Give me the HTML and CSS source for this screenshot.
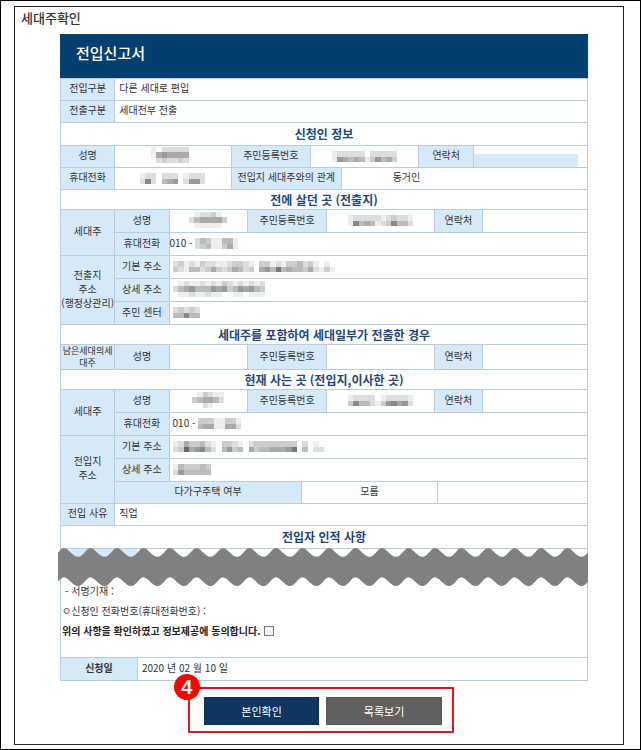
FILE: index.html
```html
<!DOCTYPE html>
<html lang="ko">
<head>
  <meta charset="UTF-8" />
  <meta name="viewport" content="width=device-width, initial-scale=1.0"/>
  <title>전입신고서</title>
  <link rel="stylesheet" href="styles.css">
</head>
<body>
  <main class="sheet">
    <h1 class="page-title">세대주확인</h1>

    <form class="report">
      <h2 class="report-title">전입신고서</h2>

      <table>
        <colgroup><col class="c-label"><col></colgroup>
        <tr><th>전입구분</th><td class="text">다른 세대로 편입</td></tr>
        <tr><th>전출구분</th><td class="text">세대전부 전출</td></tr>
      </table>

      <h3 class="section tall">신청인 정보</h3>
      <table>
        <colgroup>
          <col class="c-label"><col class="a-name"><col class="a-number"><col class="a-relation">
          <col class="a-value"><col class="a-contact"><col>
        </colgroup>
        <tr>
          <th>성명</th>
          <td><span class="mask" data-shades="efdddddf ea9aaaaf fdcddcdf"></span></td>
          <th>주민등록번호</th>
          <td colspan="2"><span class="mask" data-shades="edddddfddddd e9ababec9bac"></span></td>
          <th>연락처</th>
          <td class="field"><div class="field-fill"></div></td>
        </tr>
        <tr>
          <th>휴대전화</th>
          <td><span class="mask" data-shades="eddfdddfeddd d8dfba9fd99d"></span></td>
          <th colspan="2">전입지 세대주와의 관계</th>
          <td colspan="3" class="relation">동거인</td>
        </tr>
      </table>

      <h3 class="section">전에 살던 곳 (전출지)</h3>
      <table class="roomy">
        <colgroup>
          <col class="c-label"><col class="c-label"><col class="b-name"><col class="b-number">
          <col class="b-value"><col class="b-contact"><col>
        </colgroup>
        <tr>
          <th rowspan="2">세대주</th>
          <th>성명</th>
          <td><span class="mask" data-shades="feddcef dbaaaac feeeeef"></span></td>
          <th>주민등록번호</th>
          <td><span class="mask" data-shades="edddddedcdde e8babedc8bbd"></span></td>
          <th>연락처</th>
          <td></td>
        </tr>
        <tr>
          <th>휴대전화</th>
          <td colspan="5" class="phone">010 - <span class="mask" data-shades="dbceebbe dcbeecae"></span></td>
        </tr>
        <tr>
          <th rowspan="3">전출지<br>주소<br>(행정상관리)</th>
          <th>기본 주소</th>
          <td colspan="5" class="wide"><span class="mask" data-shades="dcedecddeedccdefccedeccbdcefef cdebbdcacdcabdcfa9b7babbcadece"></span></td>
        </tr>
        <tr>
          <th>상세 주소</th>
          <td colspan="5" class="wide"><span class="mask" data-shades="fedeededecdededed dba9bbb9a9cb9a9bc feedeedeeffeefeee"></span></td>
        </tr>
        <tr>
          <th>주민 센터</th>
          <td colspan="5" class="wide"><span class="mask" data-shades="dcdcd bb8bb"></span></td>
        </tr>
      </table>

      <h3 class="section">세대주를 포함하여 세대일부가 전출한 경우</h3>
      <table class="roomy">
        <colgroup>
          <col class="c-label"><col class="c-label"><col class="b-name"><col class="b-number">
          <col class="b-value"><col class="b-contact"><col>
        </colgroup>
        <tr>
          <th class="stacked">남은세대의세<br>대주</th>
          <th>성명</th>
          <td></td>
          <th>주민등록번호</th>
          <td></td>
          <th>연락처</th>
          <td></td>
        </tr>
      </table>

      <h3 class="section">현재 사는 곳 (전입지,이사한 곳)</h3>
      <table class="roomy">
        <colgroup>
          <col class="c-label"><col class="c-label"><col class="b-name"><col class="m-left"><col class="m-right">
          <col class="b-value"><col class="m-edge"><col class="m-contact"><col>
        </colgroup>
        <tr>
          <th rowspan="2">세대주</th>
          <th>성명</th>
          <td><span class="mask" data-shades="fecdee cbaabd ffdeff"></span></td>
          <th colspan="2">주민등록번호</th>
          <td><span class="mask" data-shades="eddddfedddde c8bbdec98a9d"></span></td>
          <th colspan="2">연락처</th>
          <td></td>
        </tr>
        <tr>
          <th>휴대전화</th>
          <td colspan="7" class="wide">010 - <span class="mask" data-shades="ccceecce baaeeaad"></span></td>
        </tr>
        <tr>
          <th rowspan="3">전입지<br>주소</th>
          <th>기본 주소</th>
          <td colspan="7" class="wide"><span class="mask" data-shades="edaccbdefccdefdccccccccfdfef dc6a98bdfb9cbfacbbaaa97fbfdd"></span></td>
        </tr>
        <tr>
          <th>상세 주소</th>
          <td colspan="7" class="wide"><span class="mask" data-shades="ebcccbc d9bbbbb"></span></td>
        </tr>
        <tr class="compact">
          <th colspan="3">다가구주택 여부</th>
          <td colspan="3">모름</td>
          <td colspan="2"></td>
        </tr>
        <tr class="compact">
          <th>전입 사유</th>
          <td colspan="8" class="text">직업</td>
        </tr>
      </table>

      <h3 class="section tall">전입자 인적 사항</h3>
      <div class="tear">
        <div class="tear-row"></div>
        <svg class="tear-wave" viewBox="0 0 530 39" preserveAspectRatio="none" aria-hidden="true">
          <path fill="#808080" d="M-20 0c4 0 9 9 14 9s8-9 12-9c4 0 9 9 14 9s8.500-9 12.500-9c4 0 9 9 14 9s8.500-9 12.500-9c4 0 9 9 14 9s8.500-9 12.500-9c4 0 9 9 14 9s8.500-9 12.500-9c4 0 9 9 14 9s8.500-9 12.500-9c4 0 9 9 14 9s8.500-9 12.500-9c4 0 9 9 14 9s8.500-9 12.500-9c4 0 9 9 14 9s8.500-9 12.500-9c4 0 9 9 14 9s8.500-9 12.500-9c4 0 9 9 14 9s8.500-9 12.500-9c4 0 9 9 14 9s8.500-9 12.500-9c4 0 9 9 14 9s8.500-9 12.500-9c4 0 9 9 14 9s8.500-9 12.500-9c4 0 9 9 14 9s8.500-9 12.500-9c4 0 9 9 14 9s8.500-9 12.500-9c4 0 9 9 14 9s8.500-9 12.500-9c4 0 9 9 14 9s8.500-9 12.500-9c4 0 9 9 14 9s8.500-9 12.500-9c4 0 9 9 14 9s8.500-9 12.500-9c4 0 9 9 14 9s8.500-9 12.500-9v30c-4 0-7.500 9-12.500 9s-10-9-14-9c-4 0-7.500 9-12.500 9s-10-9-14-9c-4 0-7.500 9-12.500 9s-10-9-14-9c-4 0-7.500 9-12.500 9s-10-9-14-9c-4 0-7.500 9-12.500 9s-10-9-14-9c-4 0-7.500 9-12.500 9s-10-9-14-9c-4 0-7.500 9-12.500 9s-10-9-14-9c-4 0-7.500 9-12.500 9s-10-9-14-9c-4 0-7.500 9-12.500 9s-10-9-14-9c-4 0-7.500 9-12.500 9s-10-9-14-9c-4 0-7.500 9-12.500 9s-10-9-14-9c-4 0-7.500 9-12.500 9s-10-9-14-9c-4 0-7.500 9-12.500 9s-10-9-14-9c-4 0-7.500 9-12.500 9s-10-9-14-9c-4 0-7.500 9-12.500 9s-10-9-14-9c-4 0-7.500 9-12.500 9s-10-9-14-9c-4 0-7.500 9-12.500 9s-10-9-14-9c-4 0-7.500 9-12.500 9s-10-9-14-9c-4 0-7.500 9-12.500 9s-10-9-14-9c-4 0-7.500 9-12.500 9s-10-9-14-9c-4 0-7.500 9-12.500 9s-10-9-14-9z"/>
        </svg>
      </div>

      <div class="consent">
        <p class="signature">- 서명기재 :</p>
        <p>ㅇ신청인 전화번호(휴대전화번호) :</p>
        <label class="agree">위의 사항을 확인하였고 정보제공에 동의합니다. <input type="checkbox" name="agree"></label>
      </div>

      <table class="roomy">
        <colgroup><col class="d-label"><col></colgroup>
        <tr><th class="strong">신청일</th><td class="text">2020 년 02 월 10 일</td></tr>
      </table>

      <div class="actions">
        <span class="step">4</span>
        <button type="submit" class="confirm">본인확인</button>
        <button type="button" class="list">목록보기</button>
      </div>
    </form>
  </main>

  <script src="mask.js"></script>
</body>
</html>
```
FILE: styles.css
```css
* {
  box-sizing: border-box;
}
body {
  margin: 0;
  min-height: 100vh;
  padding: 5px 16px 3px 13px;
  border: 1px solid #000;
  background-color: #fff;
  color: #333;
  font-family: "Noto Sans CJK KR", sans-serif;
  font-size: 10px;
  line-height: 14px;
}
.sheet {
  border: 1px solid #222;
  padding-bottom: 11px;
}
h1, h2, h3, p {
  margin: 0;
}
.page-title {
  padding: 1px 6px 0;
  font-size: 13px;
  line-height: 20px;
  font-weight: 500;
}
.report {
  margin: 6px 35px 0 45px;
}
.report-title {
  padding: 9px 16px 15px;
  background-color: #043f70;
  color: #fff;
  font-size: 15px;
  line-height: 20px;
  font-weight: 500;
}

/* tables */
table {
  width: 100%;
  table-layout: fixed;
  border-collapse: collapse;
}
th, td {
  height: 22px;
  padding: 0 0 3px;
  border: 1px solid #b9cbdc;
  text-align: center;
  font-weight: 400;
  white-space: nowrap;
}
.roomy th, .roomy td {
  height: 23px;
}
.roomy .compact th, .roomy .compact td {
  height: 22px;
}
th {
  background-color: #d6e9f8;
}
th.strong {
  font-weight: 700;
}
th.stacked {
  padding: 0;
  line-height: 12px;
  font-size: 9px;
}
td.text {
  padding-left: 4px;
  text-align: left;
}
td.phone, td.wide {
  text-align: left;
}
td.wide {
  padding-left: 3px;
}
td.relation {
  padding-right: 22%;
}
td.field {
  padding: 0;
  vertical-align: bottom;
}
.field-fill {
  height: 13px;
  margin-right: 9px;
  background-color: #d6e9f8;
}
.c-label { width: 10.3%; }
.a-name { width: 22.1%; }
.a-number { width: 15%; }
.a-relation { width: 5.9%; }
.a-value { width: 14.7%; }
.a-contact { width: 10.4%; }
.b-name { width: 14.9%; }
.b-number { width: 15%; }
.b-value { width: 20.5%; }
.b-contact { width: 9%; }
.m-left { width: 10.2%; }
.m-right { width: 4.8%; }
.m-edge { width: 0.6%; }
.m-contact { width: 8.4%; }
.d-label { width: 14.6%; }

.section {
  border: solid #b9cbdc;
  border-width: 0 1px;
  color: #1c4778;
  font-size: 12px;
  line-height: 19px;
  text-align: center;
}
.section.tall {
  line-height: 22px;
}
.mask {
  display: inline-block;
  vertical-align: middle;
}
.mask svg {
  display: block;
}

/* torn strip */
.tear {
  display: grid;
}
.tear-row, .tear-wave {
  grid-area: 1 / 1;
}
.tear-row {
  border: 1px solid #b9cbdc;
  border-bottom: 0;
  background: linear-gradient(#d6e9f8, #d6e9f8) no-repeat 0 0 / 14.6% 10px;
}
.tear-wave {
  width: calc(100% + 2px);
  height: 38px;
  margin-left: -2px;
}

.consent {
  display: flex;
  flex-direction: column;
  gap: 6px;
  margin-top: -2px;
  padding: 0 1px 19px;
  border: solid #b9cbdc;
  border-width: 0 1px;
}
.signature {
  padding-left: 3px;
}
.agree {
  display: flex;
  align-items: center;
  gap: 4px;
  color: #222;
  font-weight: 700;
}
.agree input {
  appearance: none;
  width: 10px;
  height: 10px;
  margin: 0;
  border: 1px solid #777;
  background-color: #f4f4f4;
}

/* buttons */
.actions {
  position: relative;
  display: flex;
  gap: 7px;
  width: 50.4%;
  margin: 6px 0 0 24.2%;
  padding: 8px 10px 6px 14px;
  border: 2px solid #d7191f;
  border-radius: 1px;
}
.actions button {
  flex: 1;
  height: 28px;
  padding: 0 0 1px;
  border: 1px solid #0a2f57;
  background-color: #0e3760;
  color: #fff;
  font-family: inherit;
  font-size: 11px;
  cursor: pointer;
}
.actions .list {
  border-color: #555;
  background-color: #606060;
}
.step {
  position: absolute;
  top: -15px;
  left: -16px;
  width: 26px;
  height: 26px;
  border-radius: 50%;
  background-color: #f00;
  color: #fff;
  font-family: "Liberation Sans", sans-serif;
  font-size: 20px;
  line-height: 26px;
  font-weight: 700;
  text-align: center;
}
```
FILE: mask.js
```js
// Draws the mosaic over personal data: one hex digit per block, f = white.
const NS = "http://www.w3.org/2000/svg";

document.querySelectorAll(".mask").forEach((el) => {
  const rows = el.dataset.shades.split(" ");
  const cols = rows[0].length;
  const svg = document.createElementNS(NS, "svg");
  svg.setAttribute("viewBox", `0 0 ${cols} ${rows.length}`);
  svg.setAttribute("width", Math.round(cols * 5.4));
  svg.setAttribute("height", Math.round(rows.length * 5.4));
  svg.setAttribute("preserveAspectRatio", "none");
  svg.setAttribute("shape-rendering", "crispEdges");

  rows.forEach((row, y) => {
    [...row].forEach((shade, x) => {
      if (shade === "f") return;
      const rect = document.createElementNS(NS, "rect");
      rect.setAttribute("x", x);
      rect.setAttribute("y", y);
      rect.setAttribute("width", 1);
      rect.setAttribute("height", 1);
      rect.setAttribute("fill", "#" + shade.repeat(3));
      svg.appendChild(rect);
    });
  });
  el.appendChild(svg);
});
```
